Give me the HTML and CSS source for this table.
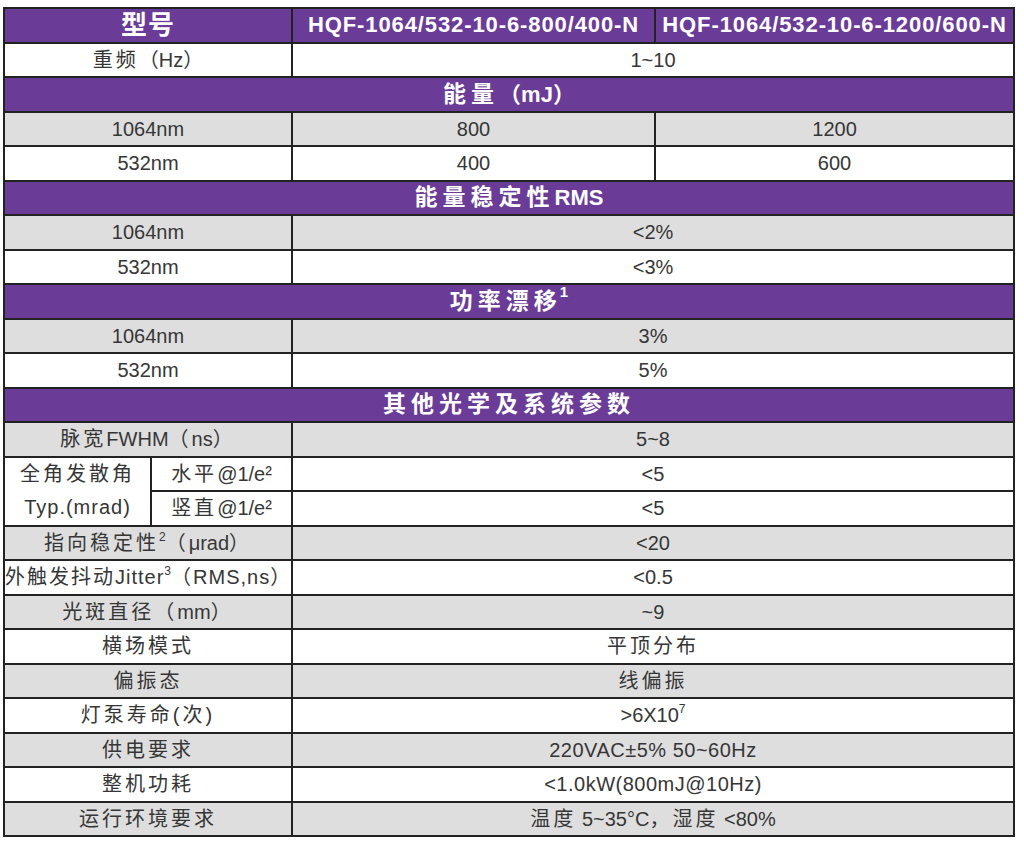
FILE: index.html
```html
<!DOCTYPE html>
<html lang="zh">
<head>
<meta charset="utf-8">
<title>HQF 参数表</title>
<link rel="stylesheet" href="styles.css">
</head>
<body>
<table class="spec">
  <colgroup>
    <col class="c1a"><col class="c1b"><col class="c2"><col class="c3">
  </colgroup>
  <tr class="head">
    <th colspan="2" class="zh-head">型号</th>
    <th class="model">HQF-1064/532-10-6-800/400-N</th>
    <th class="model">HQF-1064/532-10-6-1200/600-N</th>
  </tr>
  <tr class="w">
    <td colspan="2" class="zh">重频<span class="en">（Hz）</span></td>
    <td colspan="2">1~10</td>
  </tr>
  <tr class="sec"><th colspan="4"><span class="zs">能量</span><span class="es">（mJ）</span></th></tr>
  <tr class="g"><td colspan="2">1064nm</td><td>800</td><td>1200</td></tr>
  <tr class="w"><td colspan="2">532nm</td><td>400</td><td>600</td></tr>
  <tr class="sec"><th colspan="4"><span class="zs">能量稳定性</span><span class="es">RMS</span></th></tr>
  <tr class="g"><td colspan="2">1064nm</td><td colspan="2">&lt;2%</td></tr>
  <tr class="w"><td colspan="2">532nm</td><td colspan="2">&lt;3%</td></tr>
  <tr class="sec"><th colspan="4"><span class="zs">功率漂</span><span class="zs last">移</span><sup class="hsup">1</sup></th></tr>
  <tr class="g"><td colspan="2">1064nm</td><td colspan="2">3%</td></tr>
  <tr class="w"><td colspan="2">532nm</td><td colspan="2">5%</td></tr>
  <tr class="sec"><th colspan="4"><span class="zs">其他光学及系统参数</span></th></tr>
  <tr class="g"><td colspan="2" class="zh">脉宽<span class="en">FWHM</span>（<span class="en">ns</span>）</td><td colspan="2">5~8</td></tr>
  <tr class="w">
    <td rowspan="2" class="zh div">全角发散角<br><span class="en wide">Typ.(mrad)</span></td>
    <td class="zh">水平<span class="en">@1/e²</span></td>
    <td colspan="2">&lt;5</td>
  </tr>
  <tr class="w">
    <td class="zh">竖直<span class="en">@1/e²</span></td>
    <td colspan="2">&lt;5</td>
  </tr>
  <tr class="g"><td colspan="2" class="zh">指向稳定性<sup>2</sup>（<span class="en">μrad</span>）</td><td colspan="2">&lt;20</td></tr>
  <tr class="w"><td colspan="2" class="zh tight">外触发抖动<span class="en wide">Jitter<sup>3</sup></span>（<span class="en wide">RMS,ns</span>）</td><td colspan="2">&lt;0.5</td></tr>
  <tr class="g"><td colspan="2" class="zh">光斑直径（<span class="en">mm</span>）</td><td colspan="2">~9</td></tr>
  <tr class="w"><td colspan="2" class="zh">横场模式</td><td colspan="2" class="zh">平顶分布</td></tr>
  <tr class="g"><td colspan="2" class="zh">偏振态</td><td colspan="2" class="zh">线偏振</td></tr>
  <tr class="w"><td colspan="2" class="zh">灯泵寿命(次)</td><td colspan="2">&gt;6X10<sup>7</sup></td></tr>
  <tr class="g"><td colspan="2" class="zh">供电要求</td><td colspan="2" class="num">220VAC±5% 50~60Hz</td></tr>
  <tr class="w"><td colspan="2" class="zh">整机功耗</td><td colspan="2" class="num">&lt;1.0kW(800mJ@10Hz)</td></tr>
  <tr class="g"><td colspan="2" class="zh">运行环境要求</td><td colspan="2" class="zh">温度<span class="en"> 5~35°C</span>，湿度<span class="en"> &lt;80%</span></td></tr>
</table>
</body>
</html>
```

FILE: styles.css
```css
html, body {
  margin: 0;
  padding: 0;
  background: #ffffff;
}

body {
  font-family: "Liberation Sans", "Noto Sans CJK SC", sans-serif;
  color: #363636;
}

.spec {
  margin: 7px 0 0 3px;
  width: 1010px;
  border-collapse: collapse;
  table-layout: fixed;
  border: 2px solid #222222;
}

.c1a { width: 147px; }
.c1b { width: 141px; }
.c2 { width: 363px; }
.c3 { width: 359px; }

.spec tr {
  height: 34.5px;
}

.spec td,
.spec th {
  border: 2px solid #222222;
  padding: 0;
  text-align: center;
  vertical-align: middle;
  white-space: nowrap;
  font-size: 20px;
  line-height: 22px;
  font-weight: normal;
}

.spec td.div {
  line-height: 33px;
}

.w td { background: #ffffff; }
.g td { background: #dedede; }

.head th,
.sec th {
  background: #6a3c98;
  color: #ffffff;
  font-weight: bold;
}

.head th.zh-head {
  font-size: 26px;
  letter-spacing: 1px;
}

.head th.model {
  font-size: 22px;
  letter-spacing: 0.9px;
}

.sec th .zs {
  font-size: 23px;
  letter-spacing: 5px;
}

.sec th .zs.last {
  letter-spacing: 0;
}

.sec th .es {
  font-size: 22px;
}

.sec th .hsup {
  font-size: 15px;
  vertical-align: 12px;
  margin-left: 3px;
}

.num {
  letter-spacing: 0.5px;
}

.zh {
  letter-spacing: 3px;
}

.zh .en {
  letter-spacing: 0;
}

.zh .en.wide {
  letter-spacing: 1px;
}

.zh.tight {
  letter-spacing: 2px;
}

sup {
  font-size: 12px;
  line-height: 0;
  vertical-align: 9px;
  letter-spacing: 0;
}
```
